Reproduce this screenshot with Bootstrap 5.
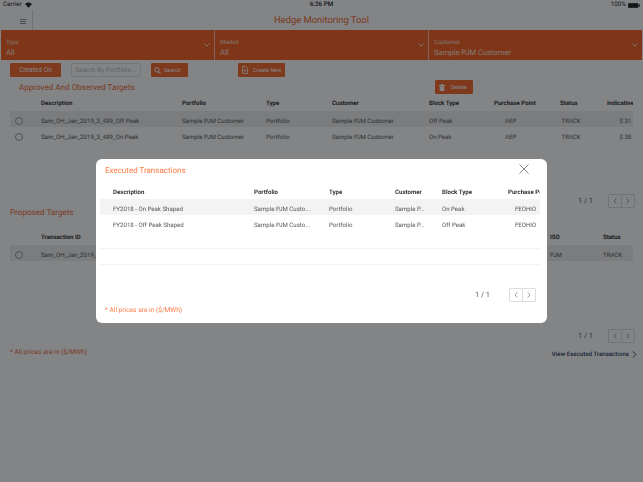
<!DOCTYPE html>
<html lang="en">
<head>
  <meta charset="UTF-8" />
  <meta name="viewport" content="width=device-width, initial-scale=1.0"/>
  <title>Hedge Monitoring Tool</title>
  <link href="https://cdn.jsdelivr.net/npm/bootstrap@5.3.3/dist/css/bootstrap.min.css" rel="stylesheet" />
  <style>
    html, body { height: 482px; overflow: hidden; }
    body { font-family: Roboto, "Liberation Sans", sans-serif; font-size: 7px; color: #444; background: #fff; text-rendering: geometricPrecision; }

    .status-strip { height: 10px; font-size: 6.3px; padding: 0 3px; color: #222; }
    .status-strip > div { flex: 1 1 0; }
    .wifi-mark { margin-left: 3px; }
    .batt-mark { margin-left: 2px; }

    .top-head { height: 20px; }
    .menu-cell { width: 33px; height: 20px; border-right: 1px solid #d8d8d8; padding: 2px 6px 0 0; }
    .app-title { flex: 1; text-align: center; font-size: 9.4px; color: #f0682f; margin-right: 33px; line-height: 21px; }

    .filter-strip { height: 30px; margin: 0 1px; background: #f96121; color: #fff; }
    .filter-cell { width: 214px; height: 30px; padding: 8px 5px 0; border-right: 1px solid #fbb; position: relative; }
    .filter-cell:last-child { border-right: 0; width: 213px; }
    .filter-cell .lbl { font-size: 6px; line-height: 9px; opacity: .8; }
    .filter-cell .val { font-size: 7.6px; line-height: 12px; opacity: .85; }
    .filter-cell svg { position: absolute; right: 4px; top: 13px; }

    .tool-row { height: 14px; margin-top: 3px; padding-left: 10px; }
    .act-btn { --bs-btn-padding-y: 0; --bs-btn-padding-x: 0; --bs-btn-font-size: 5.5px; --bs-btn-line-height: 10px; --bs-btn-border-radius: 1px; --bs-btn-color: #fff; --bs-btn-bg: #f96121; --bs-btn-border-color: #f96121; height: 14px; display: flex; align-items: center; justify-content: flex-start; opacity: .95; }
    .btn-created { width: 51px; justify-content: center; --bs-btn-font-size: 6.6px; }
    .btn-search { width: 37px; margin-left: 10px; padding-left: 2px; gap: 3px; }
    .btn-create { width: 47px; margin-left: 50px; padding-left: 3px; gap: 5px; }
    .btn-delete { width: 38px; margin-left: auto; margin-right: 170px; padding-left: 3px; gap: 6px; }
    .search-box { width: 70px; height: 14px; margin-left: 10px; font-size: 6.6px; padding: 0 3px; border: 1px solid #e2e2e2; border-radius: 2px; color: #bbb; line-height: 12px; }

    .section-row { height: 14px; margin-top: 3px; }
    .sect-title { font-size: 8.1px; color: #f0682f; padding-left: 19px; }
    .sect-title-two { padding-left: 10px; line-height: 12px; }

    .grid-wrap { overflow: hidden; }
    .wrap-one { margin: 2px 10px 0; }
    .wrap-two { margin: 12px 10px 0; height: 50px; }
    .data-grid { table-layout: fixed; width: 660px; margin: 0; font-size: 6.1px; line-height: 9px; --bs-table-bg: transparent; --bs-table-color: #555; }
    .data-grid th, .data-grid td { padding: 0; height: 16px; vertical-align: middle; white-space: nowrap; overflow: hidden; }
    .data-grid td { padding-top: 4px; }
    .data-grid th { font-weight: 700; font-size: 6.1px; color: #333; height: 15px; }
    .data-grid tbody tr.shade td { background: #eeeeee; }
    .radio-dot { display: block; width: 8px; height: 8px; border: 1px solid #999; border-radius: 50%; margin-left: 5px; }
    .shift-c { padding-left: 11px !important; }

    .c0 { width: 31px; } .c1 { width: 141px; } .c2 { width: 84px; } .c3 { width: 66px; }
    .c4 { width: 97px; } .c5 { width: 65px; } .c6 { width: 66px; } .c7 { width: 47px; } .c8 { width: 63px; }
    .t2c1 { width: 509px; } .t2c2 { width: 53px; } .t2c3 { width: 67px; }

    .pager-row { height: 14px; padding-right: 8px; font-size: 7.4px; color: #555; }
    .pager-one { margin-top: 51px; margin-bottom: -2px; }
    .pager-two { margin-top: 49px; }
    .pager-txt { margin-right: 15px; }
    .pager-group { width: 27px; height: 14px; border: 1px solid #ddd; border-radius: 1px; }
    .pager-group span { flex: 1; display: flex; align-items: center; justify-content: center; }
    .pager-group span + span { border-left: 1px solid #ddd; }

    .foot-row { padding: 0 6px 0 10px; margin-top: 3px; }
    .note-txt { color: #f0682f; font-size: 6.6px; }
    .view-link { color: #1f3a5c; font-size: 6.15px; font-weight: 500; text-decoration: none; margin-top: 4px; gap: 3px; }

    .modal-backdrop { --bs-backdrop-bg: #05090d; --bs-backdrop-opacity: .5; }
    .exec-modal { --bs-modal-width: 451px; --bs-modal-margin: 0; --bs-modal-border-width: 0; --bs-modal-border-radius: 6px; }
    .exec-modal .modal-dialog { margin: 159px 0 0 96px; }
    .exec-modal .modal-content { height: 164px; }
    .exec-title { font-size: 8px; color: #fb7a45; padding: 7px 0 0 9px; line-height: 10px; }
    .exec-close { position: absolute; top: 5px; right: 18px; line-height: 0; }
    .exec-wrap { margin: 9px 7px 0 4px; height: 80px; }
    .exec-grid { width: 480px; }
    .exec-grid tbody tr.shade td { background: #f3f3f3; }
    .exec-grid th { height: 14px; }
    .exec-grid td { padding-top: 5px; }
    .exec-grid tr.line td { border-bottom: 1px solid #f4f4f4; padding: 0; }
    .exec-grid tr.line-first td { height: 17px; }
    .exec-grid .shift-c { padding-left: 7px !important; }
    .e0 { width: 13px; } .e1 { width: 141px; } .e2 { width: 75px; } .e3 { width: 66px; }
    .e4 { width: 47px; } .e5 { width: 66px; } .e6 { width: 72px; }
    .exec-pager { margin: 23px 11px 0 0; padding-right: 0; }
    .exec-pager .pager-txt { margin-right: 19px; }
    .exec-note { padding-left: 9px; margin-top: 4px; color: #fb7a45; }
  </style>
</head>
<body>
  <div class="d-flex status-strip align-items-center">
    <div class="d-flex align-items-center">Carrier
      <svg class="wifi-mark" width="7" height="6" viewBox="0 0 14 11"><path d="M7 11 0 3.500C4-.8 10-.8 14 3.500z" fill="#222"/></svg>
    </div>
    <div class="text-center fw-medium">6:26 PM</div>
    <div class="d-flex align-items-center justify-content-end">100%
      <svg class="batt-mark" width="12" height="5" viewBox="0 0 24 10"><rect x=".5" y=".5" width="20" height="9" rx="1.500" fill="#222" stroke="#222"/><rect x="22" y="3" width="2" height="4" fill="#222"/></svg>
    </div>
  </div>

  <div class="d-flex top-head">
    <div class="menu-cell d-flex align-items-center justify-content-end">
      <svg width="6" height="5" viewBox="0 0 6 5"><path d="M0 .5h6M0 2.500h6M0 4.500h6" stroke="#777" stroke-width=".8"/></svg>
    </div>
    <div class="app-title">Hedge Monitoring Tool</div>
  </div>

  <div class="d-flex filter-strip">
    <div class="filter-cell">
      <div class="lbl">Type</div><div class="val">All</div>
      <svg width="6" height="4" viewBox="0 0 6 4"><path d="M.5.500 3 3.200 5.500.5" fill="none" stroke="#fff" stroke-width=".8"/></svg>
    </div>
    <div class="filter-cell">
      <div class="lbl">Market</div><div class="val">All</div>
      <svg width="6" height="4" viewBox="0 0 6 4"><path d="M.5.500 3 3.200 5.500.5" fill="none" stroke="#fff" stroke-width=".8"/></svg>
    </div>
    <div class="filter-cell">
      <div class="lbl">Customer</div><div class="val">Sample PJM Customer</div>
      <svg width="6" height="4" viewBox="0 0 6 4"><path d="M.5.500 3 3.200 5.500.5" fill="none" stroke="#fff" stroke-width=".8"/></svg>
    </div>
  </div>

  <div class="d-flex tool-row">
    <button type="button" class="btn act-btn btn-created">Created On</button>
    <div class="search-box">Search By Portfolio...</div>
    <button type="button" class="btn act-btn btn-search">
      <svg width="7" height="7" viewBox="0 0 8 8"><circle cx="3.300" cy="3.300" r="2.500" fill="none" stroke="#fff" stroke-width="1.100"/><path d="M5.200 5.200 7.500 7.500" stroke="#fff" stroke-width="1.300"/></svg>Search
    </button>
    <button type="button" class="btn act-btn btn-create">
      <svg width="6" height="8" viewBox="0 0 6 8"><path d="M.5.500h3.200L5.500 2.300v5.200H.5z" fill="none" stroke="#fff" stroke-width=".8"/><path d="M3 3v3M1.700 4.500h2.600" stroke="#fff" stroke-width=".7"/></svg>Create New
    </button>
  </div>

  <div class="d-flex section-row align-items-center">
    <div class="sect-title">Approved And Observed Targets</div>
    <button type="button" class="btn act-btn btn-delete">
      <svg width="6" height="7" viewBox="0 0 6 7"><path d="M0 1h6v1H0zM2 0h2v1H2zM.7 2.300h4.600V7H.7z" fill="#fff"/></svg>Delete
    </button>
  </div>

  <div class="grid-wrap wrap-one">
    <table class="table table-borderless data-grid">
      <colgroup><col class="c0"><col class="c1"><col class="c2"><col class="c3"><col class="c4"><col class="c5"><col class="c6"><col class="c7"><col class="c8"></colgroup>
      <thead><tr><th></th><th>Description</th><th>Portfolio</th><th>Type</th><th>Customer</th><th>Block Type</th><th>Purchase Point</th><th>Status</th><th>Indicative Price</th></tr></thead>
      <tbody>
        <tr class="shade"><td><span class="radio-dot"></span></td><td>Sam_OH_Jan_2019_3_489_Off Peak</td><td>Sample PJM Customer</td><td>Portfolio</td><td>Sample PJM Customer</td><td>Off Peak</td><td class="shift-c">AEP</td><td>&nbsp;TRACK</td><td class="shift-c">&nbsp;$ 31.00</td></tr>
        <tr><td><span class="radio-dot"></span></td><td>Sam_OH_Jan_2019_3_489_On Peak</td><td>Sample PJM Customer</td><td>Portfolio</td><td>Sample PJM Customer</td><td>On Peak</td><td class="shift-c">AEP</td><td>&nbsp;TRACK</td><td class="shift-c">&nbsp;$ 38.00</td></tr>
      </tbody>
    </table>
  </div>

  <div class="d-flex pager-row justify-content-end align-items-center pager-one">
    <span class="pager-txt">1 / 1</span>
    <div class="pager-group d-flex">
      <span><svg width="4" height="6" viewBox="0 0 4 6"><path d="M3.300.5 1 3l2.300 2.500" fill="none" stroke="#888" stroke-width=".8"/></svg></span>
      <span><svg width="4" height="6" viewBox="0 0 4 6"><path d="M.7.5 3 3 .7 5.500" fill="none" stroke="#888" stroke-width=".8"/></svg></span>
    </div>
  </div>

  <div class="sect-title sect-title-two">Proposed Targets</div>

  <div class="grid-wrap wrap-two">
    <table class="table table-borderless data-grid">
      <colgroup><col class="c0"><col class="t2c1"><col class="t2c2"><col class="t2c3"></colgroup>
      <thead><tr><th></th><th>Transaction ID</th><th>ISO</th><th>Status</th></tr></thead>
      <tbody>
        <tr class="shade"><td><span class="radio-dot"></span></td><td>Sam_OH_Jan_2019_3_489_Off Peak</td><td>PJM</td><td>TRACK</td></tr>
      </tbody>
    </table>
  </div>

  <div class="d-flex pager-row justify-content-end align-items-center pager-two">
    <span class="pager-txt">1 / 1</span>
    <div class="pager-group d-flex">
      <span><svg width="4" height="6" viewBox="0 0 4 6"><path d="M3.300.5 1 3l2.300 2.500" fill="none" stroke="#888" stroke-width=".8"/></svg></span>
      <span><svg width="4" height="6" viewBox="0 0 4 6"><path d="M.7.5 3 3 .7 5.500" fill="none" stroke="#888" stroke-width=".8"/></svg></span>
    </div>
  </div>

  <div class="d-flex foot-row justify-content-between align-items-center">
    <span class="note-txt">* All prices are in ($/MWh)</span>
    <a class="view-link d-flex align-items-center" href="#">View Executed Transactions
      <svg width="5" height="7" viewBox="0 0 5 7"><path d="M1 .5 4 3.500 1 6.500" fill="none" stroke="#1f3a5c" stroke-width=".9"/></svg>
    </a>
  </div>

  <div class="modal-backdrop show"></div>
  <div class="modal d-block exec-modal" tabindex="-1">
    <div class="modal-dialog">
      <div class="modal-content">
        <div class="exec-title">Executed Transactions</div>
        <div class="exec-close">
          <svg width="10" height="10" viewBox="0 0 10 10"><path d="M.5.500l9 9M9.500.500l-9 9" stroke="#666" stroke-width=".8"/></svg>
        </div>
        <div class="grid-wrap exec-wrap">
          <table class="table table-borderless data-grid exec-grid">
            <colgroup><col class="e0"><col class="e1"><col class="e2"><col class="e3"><col class="e4"><col class="e5"><col class="e6"></colgroup>
            <thead><tr><th></th><th>Description</th><th>Portfolio</th><th>Type</th><th>Customer</th><th>Block Type</th><th>Purchase Point</th></tr></thead>
            <tbody>
              <tr class="shade"><td></td><td>FY2018 - On Peak Shaped</td><td>Sample PJM Custo...</td><td>Portfolio</td><td>Sample P...</td><td>On Peak</td><td class="shift-c">FEOHIO</td></tr>
              <tr><td></td><td>FY2018 - Off Peak Shaped</td><td>Sample PJM Custo...</td><td>Portfolio</td><td>Sample P...</td><td>Off Peak</td><td class="shift-c">FEOHIO</td></tr>
              <tr class="line line-first"><td colspan="7"></td></tr>
              <tr class="line"><td colspan="7"></td></tr>
            </tbody>
          </table>
        </div>
        <div class="d-flex pager-row justify-content-end align-items-center exec-pager">
          <span class="pager-txt">1 / 1</span>
          <div class="pager-group d-flex">
            <span><svg width="4" height="6" viewBox="0 0 4 6"><path d="M3.300.5 1 3l2.300 2.500" fill="none" stroke="#888" stroke-width=".8"/></svg></span>
            <span><svg width="4" height="6" viewBox="0 0 4 6"><path d="M.7.5 3 3 .7 5.500" fill="none" stroke="#888" stroke-width=".8"/></svg></span>
          </div>
        </div>
        <div class="note-txt exec-note">* All prices are in ($/MWh)</div>
      </div>
    </div>
  </div>
</body>
</html>
